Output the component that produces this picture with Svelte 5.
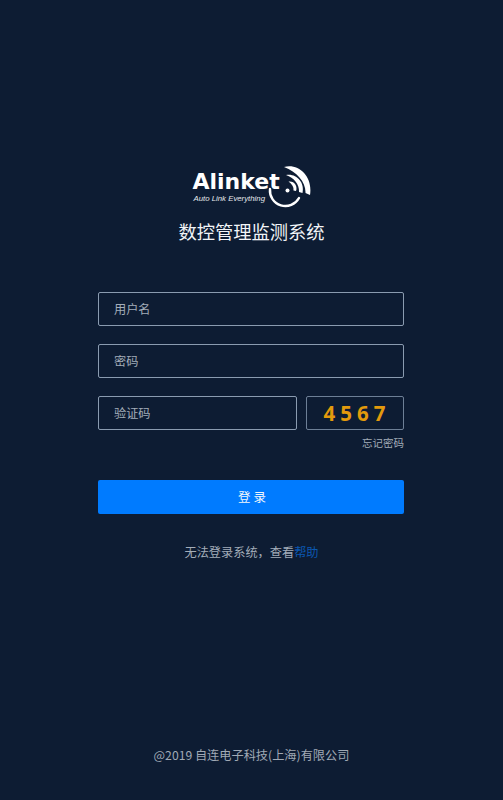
<script>
  let username = "";
  let password = "";
  let code = "";
</script>

<div class="page">
  <header class="brand">
    <div class="logo">
      <div class="words">
        <span class="name">Alinket</span>
        <span class="slogan">Auto Link Everything</span>
      </div>
      <svg class="waves" viewBox="0 0 48 44" width="48" height="44" fill="#fff">
        <path d="M21 2 C36 -2 50 12 47 30 L42.5 28 C43 17 34 7 21 2 Z" />
        <path d="M23 10 C33 8 42 17 39.5 28 L36 27 C36.5 19 31 13 23 10 Z" />
        <path d="M25.5 16.5 C31 15.5 35 21 33 26 L30.5 25.5 C31 22 29 19 25.5 16.5 Z" />
        <circle cx="24.5" cy="25.5" r="2" />
        <path d="M7 24 A15.5 15.5 0 0 0 36 33" fill="none" stroke="#fff" stroke-width="2.4" stroke-linecap="round" />
      </svg>
    </div>
    <h1>数控管理监测系统</h1>
  </header>

  <form class="form" on:submit|preventDefault>
    <input type="text" placeholder="用户名" bind:value={username} />
    <input type="password" placeholder="密码" bind:value={password} />
    <div class="code-row">
      <input type="text" placeholder="验证码" bind:value={code} />
      <div class="captcha">4567</div>
    </div>
    <a class="forgot" href="#forgot">忘记密码</a>
    <button type="submit">登 录</button>
  </form>

  <p class="help">无法登录系统，查看<a href="#help">帮助</a></p>

  <footer>@2019 自连电子科技(上海)有限公司</footer>
</div>

<style>
  :global(body) {
    background: #0d1c33;
  }

  .page {
    height: 800px;
    box-sizing: border-box;
    padding-top: 165px;
    display: flex;
    flex-direction: column;
    align-items: center;
    background: #0d1c33;
    font-family: "Noto Sans CJK SC", "Noto Sans", sans-serif;
    overflow: hidden;
  }

  .brand {
    display: flex;
    flex-direction: column;
    align-items: center;
  }

  .logo {
    display: flex;
    align-items: flex-start;
    height: 44px;
  }

  .words {
    width: 88px;
    display: flex;
    flex-direction: column;
    padding-top: 4px;
    margin-right: -18px;
    white-space: nowrap;
  }

  .name {
    font-family: "DejaVu Sans", sans-serif;
    font-weight: 700;
    font-size: 22px;
    line-height: 25px;
    color: #fff;
  }

  .slogan {
    font-family: "Liberation Sans", sans-serif;
    font-style: italic;
    font-size: 7.8px;
    line-height: 10px;
    color: #e5e8ec;
    margin-left: 1px;
  }

  .waves {
    display: block;
  }

  h1 {
    margin: 9px 0 0;
    font-size: 18.3px;
    line-height: 26px;
    font-weight: 400;
    color: #f2f4f7;
  }

  .form {
    width: 306px;
    margin: 48px 1px 0 0;
    display: flex;
    flex-direction: column;
    gap: 18px;
  }

  input {
    display: block;
    width: 100%;
    height: 34px;
    box-sizing: border-box;
    padding: 0 15px;
    background: transparent;
    border: 1px solid #8a9bb0;
    border-radius: 2px;
    outline: none;
    font-family: inherit;
    font-size: 12.2px;
    color: #fff;
  }

  input::placeholder {
    color: #a3adb9;
    opacity: 1;
  }

  .code-row {
    display: flex;
    gap: 9px;
  }

  .code-row input {
    flex: 1;
    min-width: 0;
  }

  .captcha {
    width: 98px;
    height: 34px;
    box-sizing: border-box;
    flex: none;
    border: 1px solid #6d7f96;
    border-radius: 2px;
    text-align: center;
    font-family: "Noto Sans", sans-serif;
    font-weight: 700;
    font-size: 20.5px;
    line-height: 32px;
    letter-spacing: 5px;
    padding-left: 4px;
    color: #e39a0c;
  }

  .forgot {
    align-self: flex-end;
    margin-top: -13px;
    font-size: 10.5px;
    line-height: 15px;
    color: #a3adb9;
    text-decoration: none;
  }

  button {
    height: 34px;
    margin-top: 12px;
    padding: 0 0 2px 2px;
    background: #007bff;
    border: 0;
    border-radius: 2px;
    font-family: inherit;
    font-size: 12.5px;
    color: #f2f6fb;
  }

  .help {
    margin: 29px 0 0;
    font-size: 12.2px;
    line-height: 18px;
    color: #a3adb9;
  }

  .help a {
    color: #0b57b0;
    text-decoration: none;
  }

  footer {
    margin-top: auto;
    margin-bottom: 36px;
    font-size: 12.2px;
    line-height: 18px;
    color: #a0a9b5;
  }
</style>
